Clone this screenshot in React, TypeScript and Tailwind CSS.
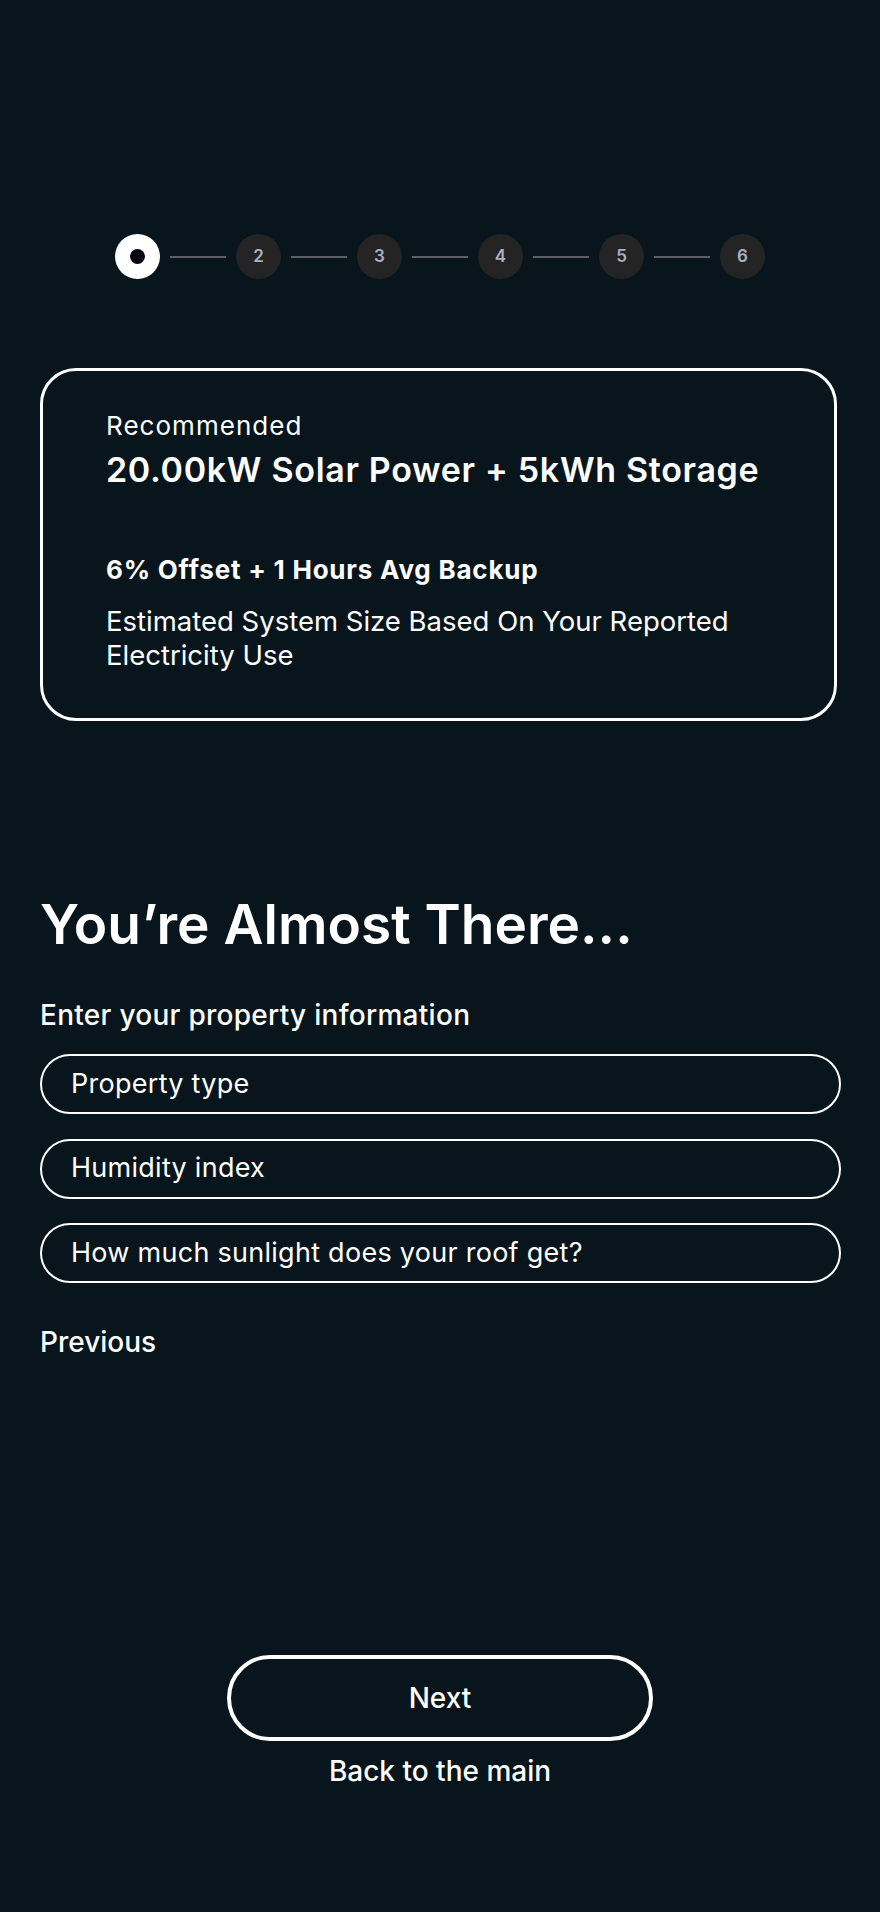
import React from 'react'

const steps = [1, 2, 3, 4, 5, 6]
const fields = ['Property type', 'Humidity index', 'How much sunlight does your roof get?']

const Stepper = () => (
  <div className="flex items-center justify-center">
    {steps.map((n, i) => (
      <div key={n} className="flex items-center">
        {i > 0 && <div className="mx-[10px] h-[2px] w-[56px] bg-[#5a5f63]" />}
        {n === 1 ? (
          <div className="flex h-[45px] w-[45px] items-center justify-center rounded-full bg-white">
            <div className="h-[15px] w-[15px] rounded-full bg-[#0b0314]" />
          </div>
        ) : (
          <div className="flex h-[45px] w-[45px] items-center justify-center rounded-full bg-[#242424] text-[17px] font-semibold text-[#a7b1c0]">
            {n}
          </div>
        )}
      </div>
    ))}
  </div>
)

const App = () => {
  return (
    <div className="min-h-screen w-full bg-[#08151c] text-white" style={{ fontFamily: 'Inter, "Noto Sans", sans-serif' }}>
      <div className="flex flex-col px-[40px] pt-[234px] pb-[126px]">
        <Stepper />

        <div className="mt-[89px] w-[797px] rounded-[36px] border-[3px] border-white pt-[39px] pb-[46px] pl-[63px] pr-6">
          <p className="text-[26px] leading-[32px] tracking-[0.04em]">Recommended</p>
          <h2 className="mt-2 text-[34px] font-semibold leading-[40px] tracking-[0.02em]">20.00kW Solar Power + 5kWh Storage</h2>
          <p className="mt-16 text-[26px] font-bold leading-[32px] tracking-[0.03em]">6% Offset + 1 Hours Avg Backup</p>
          <p className="mt-[18px] text-[27.5px] leading-[34px]">
            Estimated System Size Based On Your Reported
            <br />
            Electricity Use
          </p>
        </div>

        <h1 className="mt-[171px] text-[55px] font-semibold leading-[64px]">You’re Almost There...</h1>
        <p className="mt-[43px] text-[28px] font-medium leading-[32px] tracking-[0.01em]">Enter your property information</p>

        <div className="mt-[23px] flex w-[801px] flex-col gap-[24.5px]">
          {fields.map((f) => (
            <div key={f} className="flex h-[60px] items-center rounded-full border-2 border-white pl-[29px] text-[27px] tracking-[0.01em]">
              {f}
            </div>
          ))}
        </div>

        <button className="mt-[43px] self-start text-[28px] font-medium leading-[32px]">Previous</button>

        <button className="mt-[297px] h-[86px] w-[426px] self-center rounded-[44px] border-4 border-white text-[28px] font-medium">
          Next
        </button>
        <button className="mt-[14px] self-center text-[28px] font-medium leading-[32px]">Back to the main</button>
      </div>
    </div>
  )
}

export default App
